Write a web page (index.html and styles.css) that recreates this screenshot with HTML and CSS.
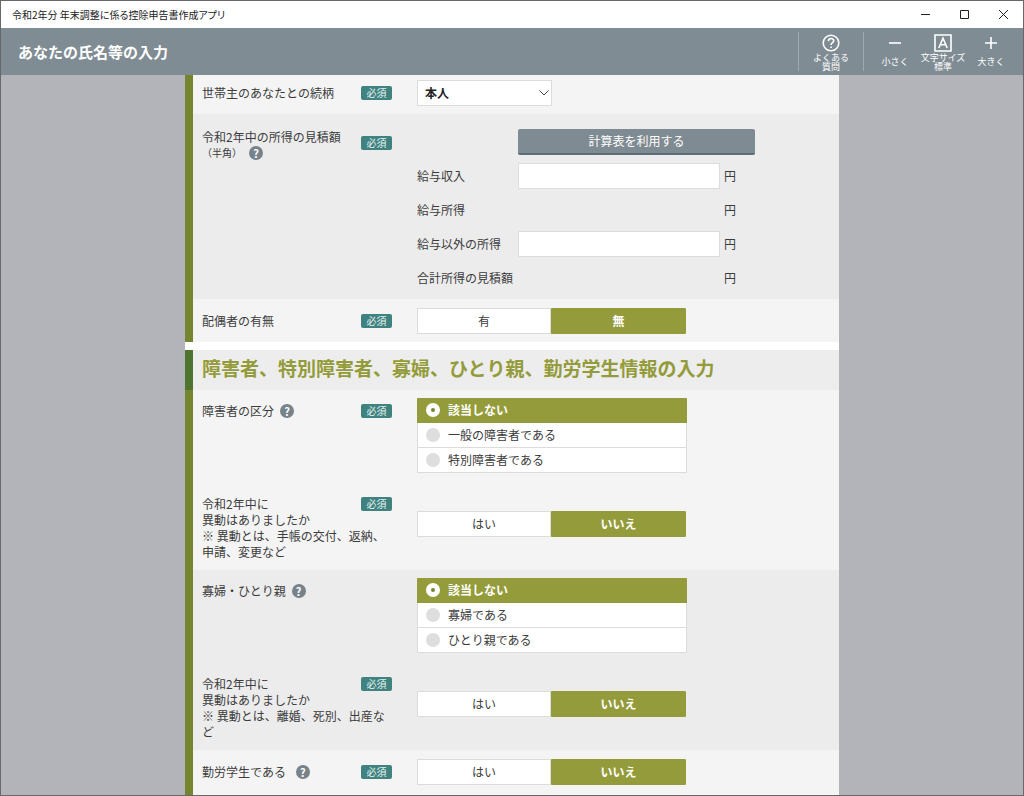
FILE: index.html
```html
<!DOCTYPE html>
<html lang="ja">
<head>
<meta charset="utf-8">
<meta name="viewport" content="width=device-width, initial-scale=1">
<title>令和2年分 年末調整に係る控除申告書作成アプリ</title>
<link rel="stylesheet" href="styles.css">
</head>
<body>
<div class="window">
  <div class="titlebar">
    <span class="titlebar-text">令和2年分 年末調整に係る控除申告書作成アプリ</span>
    <div class="window-controls">
      <button type="button" class="window-button" aria-label="最小化"><svg width="11" height="11" viewBox="0 0 11 11"><path d="M1 5.500h9"/></svg></button>
      <button type="button" class="window-button" aria-label="最大化"><svg width="11" height="11" viewBox="0 0 11 11"><path d="M1.500 1.500h8v8h-8z"/></svg></button>
      <button type="button" class="window-button" aria-label="閉じる"><svg width="11" height="11" viewBox="0 0 11 11"><path d="M1 1l9 9M10 1l-9 9"/></svg></button>
    </div>
  </div>

  <header class="header">
    <h1 class="header-title">あなたの氏名等の入力</h1>
    <nav class="tools">
      <div class="tool-group help-group">
        <button type="button" class="tool">
          <svg class="tool-icon" viewBox="0 0 18 18"><circle cx="9" cy="9" r="7.8"/><path d="M6.4 7.2c0-3.6 5.3-3.4 5.3-.5 0 1.9-2.6 2-2.6 4.2M9.1 12.4v1.5"/></svg>
          <span class="tool-label"><span>よくある</span><span>質問</span></span>
        </button>
      </div>
      <div class="tool-group size-group">
        <button type="button" class="tool">
          <svg class="tool-icon" viewBox="0 0 18 18"><path d="M3 9h12"/></svg>
          <span class="tool-label">小さく</span>
        </button>
        <button type="button" class="tool">
          <svg class="tool-icon" viewBox="0 0 18 18"><path d="M1 1h16v16H1z"/><path d="M4.800 14L9 4.200L13.200 14M6.300 10.800h5.400"/></svg>
          <span class="tool-label"><span>文字サイズ</span><span>標準</span></span>
        </button>
        <button type="button" class="tool">
          <svg class="tool-icon" viewBox="0 0 18 18"><path d="M3 9h12M9 3v12"/></svg>
          <span class="tool-label">大きく</span>
        </button>
      </div>
    </nav>
  </header>

  <main class="content">
    <form class="sheet">
      <section class="section">
        <div class="row">
          <div class="field">
            <div class="caption"><label for="relation">世帯主のあなたとの続柄</label><span class="badge">必須</span></div>
            <div class="select-wrap">
              <select id="relation" class="select"><option>本人</option></select>
              <svg class="chevron" width="10" height="6" viewBox="0 0 10 6"><path d="M.5.5L5 5 9.500.5"/></svg>
            </div>
          </div>
        </div>

        <div class="row row-alt">
          <div class="field income">
            <div class="caption">
              <div class="caption-stack">
                <span>令和2年中の所得の見積額</span>
                <span class="caption-note">（半角）<button type="button" class="hint" aria-label="所得の見積額の説明">?</button></span>
              </div>
              <span class="badge">必須</span>
            </div>
            <div class="amounts">
              <button type="button" class="calc-button">計算表を利用する</button>
              <label class="amount-name" for="salary">給与収入</label><input class="amount-input" id="salary" type="text"><span class="yen">円</span>
              <span class="amount-name">給与所得</span><output class="amount-output"></output><span class="yen">円</span>
              <label class="amount-name" for="other">給与以外の所得</label><input class="amount-input" id="other" type="text"><span class="yen">円</span>
              <span class="amount-name">合計所得の見積額</span><output class="amount-output"></output><span class="yen">円</span>
            </div>
          </div>
        </div>

        <div class="row row-single">
          <div class="field">
            <div class="caption"><span>配偶者の有無</span><span class="badge">必須</span></div>
            <div class="segment" role="radiogroup" aria-label="配偶者の有無">
              <label class="segment-item"><input type="radio" name="spouse">有</label>
              <label class="segment-item"><input type="radio" name="spouse" checked>無</label>
            </div>
          </div>
        </div>
      </section>

      <section class="section">
        <h2 class="section-title">障害者、特別障害者、寡婦、ひとり親、勤労学生情報の入力</h2>

        <div class="row row-double">
          <div class="field">
            <div class="caption"><span class="caption-line">障害者の区分<button type="button" class="hint" aria-label="障害者の区分の説明">?</button></span><span class="badge">必須</span></div>
            <div class="options" role="radiogroup" aria-label="障害者の区分">
              <label class="option"><input type="radio" name="disability" checked>該当しない</label>
              <label class="option"><input type="radio" name="disability">一般の障害者である</label>
              <label class="option"><input type="radio" name="disability">特別障害者である</label>
            </div>
          </div>
          <div class="field">
            <div class="question">
              <div class="caption"><span>令和2年中に</span><span class="badge">必須</span></div>
              <p>異動はありましたか<br>※ 異動とは、手帳の交付、返納、申請、変更など</p>
            </div>
            <div class="segment" role="radiogroup" aria-label="障害者の異動">
              <label class="segment-item"><input type="radio" name="disability-change">はい</label>
              <label class="segment-item"><input type="radio" name="disability-change" checked>いいえ</label>
            </div>
          </div>
        </div>

        <div class="row row-alt row-double">
          <div class="field">
            <div class="caption"><span class="caption-line">寡婦・ひとり親<button type="button" class="hint" aria-label="寡婦・ひとり親の説明">?</button></span></div>
            <div class="options" role="radiogroup" aria-label="寡婦・ひとり親">
              <label class="option"><input type="radio" name="widow" checked>該当しない</label>
              <label class="option"><input type="radio" name="widow">寡婦である</label>
              <label class="option"><input type="radio" name="widow">ひとり親である</label>
            </div>
          </div>
          <div class="field">
            <div class="question">
              <div class="caption"><span>令和2年中に</span><span class="badge">必須</span></div>
              <p>異動はありましたか<br>※ 異動とは、離婚、死別、出産など</p>
            </div>
            <div class="segment" role="radiogroup" aria-label="寡婦・ひとり親の異動">
              <label class="segment-item"><input type="radio" name="widow-change">はい</label>
              <label class="segment-item"><input type="radio" name="widow-change" checked>いいえ</label>
            </div>
          </div>
        </div>

        <div class="row row-single row-last">
          <div class="field">
            <div class="caption"><span class="caption-line caption-wide">勤労学生である<button type="button" class="hint" aria-label="勤労学生の説明">?</button></span><span class="badge">必須</span></div>
            <div class="segment" role="radiogroup" aria-label="勤労学生である">
              <label class="segment-item"><input type="radio" name="student">はい</label>
              <label class="segment-item"><input type="radio" name="student" checked>いいえ</label>
            </div>
          </div>
        </div>
      </section>
    </form>
  </main>
</div>
</body>
</html>
```

FILE: styles.css
```css
* { box-sizing: border-box; }

body {
  margin: 0;
  color: #3c3c3c;
  font: 12px/16px "Noto Sans CJK JP", sans-serif;
}

button, input, select { font: inherit; color: inherit; margin: 0; }
button { padding: 0; border: 0; background: none; }

.window {
  display: flex;
  flex-direction: column;
  height: 100vh;
  overflow: hidden;
  border: 1px solid #66686b;
  background: #b3b4b9;
}

/* Title bar */
.titlebar {
  display: flex;
  flex: none;
  align-items: center;
  justify-content: space-between;
  height: 27px;
  padding: 0 0 0 11px;
  background: #fff;
  color: #222;
}
.titlebar-text { font-size: 10px; font-feature-settings: "palt"; }
.window-controls { display: flex; }
.window-button {
  display: grid;
  place-items: center;
  width: 39px;
  height: 27px;
}
.window-button svg { fill: none; stroke: #222; stroke-width: 1; }

/* Header */
.header {
  display: flex;
  flex: none;
  align-items: center;
  justify-content: space-between;
  height: 47px;
  padding: 0 8px 0 17px;
  background: #808c93;
  color: #fff;
}
.header-title { margin: 0; font-size: 15px; line-height: 24px; font-weight: 700; }
.tools { display: flex; }
.tool-group {
  display: flex;
  height: 39px;
  border-left: 1px solid #9fa9ae;
}
.help-group .tool { width: 64px; }
.size-group { padding-left: 7px; }
.tool {
  display: flex;
  flex-direction: column;
  align-items: center;
  width: 48px;
  padding-top: 2px;
}
.tool-icon {
  flex: none;
  width: 18px;
  height: 18px;
  fill: none;
  stroke: #fff;
  stroke-width: 1.6;
}
.tool-label {
  display: grid;
  flex: 1;
  align-content: center;
  justify-items: center;
  font-size: 9px;
  line-height: 9px;
  white-space: nowrap;
}

/* Form sheet */
.content { flex: 1; min-height: 0; overflow: hidden; }
.sheet {
  display: grid;
  gap: 8px;
  max-width: 654px;
  margin: 0 auto;
  background: #fff;
}
.section { border-left: 8px solid #75842f; }
.section-title {
  margin: 0 0 0 -8px;
  padding: 4px 0 8px 9px;
  border-left: 8px solid #4f742f;
  background: #ecedec;
  color: #949b3a;
  font-size: 19px;
  line-height: 28px;
  font-weight: 700;
}
.row { padding: 5px 9px 8px; background: #f4f4f4; }
.row-alt { background: #ececec; }
.row-single { padding: 9px 9px 8px; }
.row-last { padding-bottom: 12px; }
.row-double { display: grid; gap: 23px; padding: 8px 9px 10px; }

.field {
  display: grid;
  grid-template-columns: 190px 1fr;
  column-gap: 25px;
  align-items: start;
}
.caption {
  display: flex;
  align-items: center;
  justify-content: space-between;
  min-height: 26px;
}
.question .caption { min-height: 16px; }
.question p { margin: 0; }
.question + .segment { margin-top: 15px; }
.caption-line { display: flex; align-items: center; gap: 6px; }
.caption-wide { gap: 10px; }
.caption-stack { display: grid; padding-top: 4px; }
.caption-note { display: flex; align-items: center; gap: 7px; font-size: 10px; }

.badge {
  width: 31px;
  border-radius: 2px;
  background: #3f8280;
  color: #e4f2f0;
  font-size: 10px;
  line-height: 14px;
  text-align: center;
}
.hint {
  width: 14px;
  height: 14px;
  border-radius: 50%;
  background: #77828a;
  color: #fff;
  font-size: 11px;
  line-height: 14px;
  font-weight: 700;
  text-align: center;
}

.select-wrap { position: relative; width: 135px; }
.select {
  appearance: none;
  width: 100%;
  height: 26px;
  padding: 0 7px;
  border: 1px solid #dcdcdc;
  border-radius: 0;
  background: #fff;
  color: #222;
  font-weight: 700;
}
.chevron {
  position: absolute;
  top: 10px;
  right: 3px;
  fill: none;
  stroke: #444;
  pointer-events: none;
}

/* Income amounts */
.income { padding: 6px 0 0; }
.income .caption { min-height: 34px; }
.amounts {
  display: grid;
  grid-template-columns: 101px 202px 35px;
  grid-auto-rows: 34px;
  align-items: center;
  margin-bottom: -4px;
}
.calc-button {
  grid-column: 2 / 4;
  height: 26px;
  border-bottom: 2px solid #5f6c75;
  border-radius: 2px;
  background: #7f8b92;
  color: #fff;
}
.amount-name { grid-column: 1; }
.amount-input {
  width: 100%;
  height: 26px;
  padding: 0 8px;
  border: 1px solid #dcdcdc;
  background: #fff;
  text-align: right;
}
.yen { padding-left: 4px; }

/* Two-way switch */
.segment {
  display: grid;
  grid-template-columns: 134px 135px;
  height: 26px;
}
.segment-item {
  position: relative;
  border: 1px solid #dcdcdc;
  background: #fff;
  line-height: 24px;
  text-align: center;
}
.segment-item input {
  position: absolute;
  inset: 0;
  appearance: none;
}
.segment-item:has(:checked),
.option:has(:checked) {
  border-color: #949b3a;
  background: #949b3a;
  color: #fff;
  font-weight: 700;
}
.segment-item:has(:checked) { border-radius: 0 1px 1px 0; }

/* Option list */
.options { width: 270px; }
.option {
  display: flex;
  align-items: center;
  gap: 8px;
  height: 25px;
  padding-left: 8px;
  border: 1px solid #dcdcdc;
  border-top: 0;
  background: #fff;
}
.option:first-child { border-radius: 1px 1px 0 0; }
.option input {
  appearance: none;
  width: 14px;
  height: 14px;
  border-radius: 50%;
  background: #dedede;
}
.option input:checked {
  border: 5px solid #fff;
  background: #75842f;
}
```
